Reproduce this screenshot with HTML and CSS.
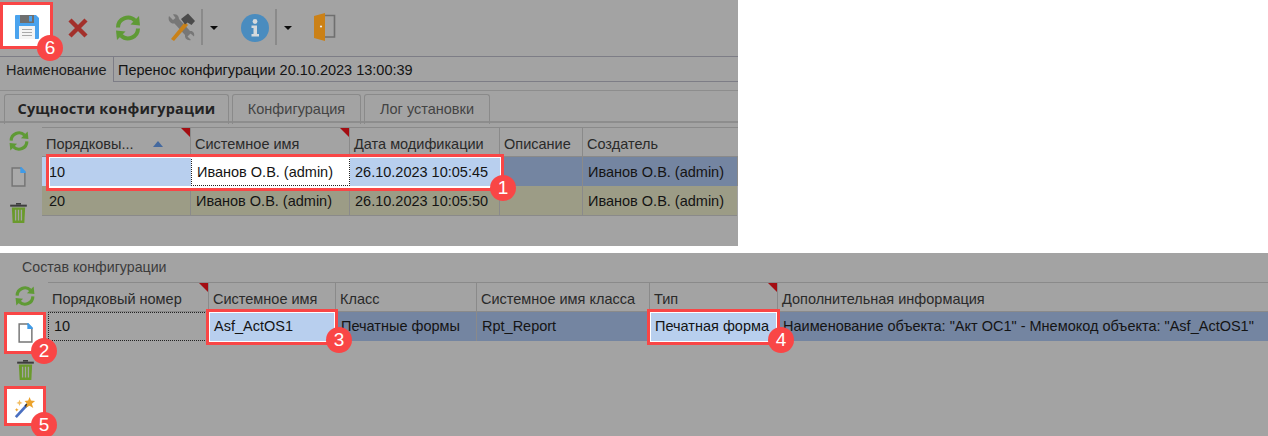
FILE: index.html
```html
<!DOCTYPE html>
<html lang="ru">
<head>
<meta charset="utf-8">
<title>Перенос конфигурации</title>
<link rel="stylesheet" href="styles.css">
</head>
<body>
<svg class="defs" width="0" height="0" aria-hidden="true">
  <symbol id="i-refresh" viewBox="0 0 28 28">
    <path d="M4 13.5A10 10 0 0 1 21 6.5" fill="none" stroke="#5f9a35" stroke-width="4"/>
    <path d="M16.5 10.5L26 11.5L25 2Z" fill="#5f9a35"/>
    <path d="M24 14.5A10 10 0 0 1 7 21.5" fill="none" stroke="#5f9a35" stroke-width="4"/>
    <path d="M11.5 17.5L2 16.5L3 26Z" fill="#5f9a35"/>
  </symbol>
  <symbol id="i-page" viewBox="0 0 16 22">
    <path d="M1 1H10.5L15 6V21H1Z" fill="currentColor" stroke="#757575" stroke-width="1.6"/>
    <path d="M10 0H11L16 5V6.5H10Z" fill="#3f9be8"/>
  </symbol>
  <symbol id="i-trash" viewBox="0 0 20 24">
    <rect x="7" y="0" width="6" height="2" fill="#3d3d3d"/>
    <rect x="0" y="2" width="20" height="2.4" fill="#3d3d3d"/>
    <path d="M2 5.5H18L17 24H3Z" fill="#6a9a2c"/>
    <path d="M6.5 8V21M10 8V21M13.5 8V21" stroke="#a3a3a3" stroke-width="1.6"/>
  </symbol>
</svg>

<main class="screen">
  <section class="panel panel-top">
    <div class="toolbar">
      <div class="tool tool-save">
        <svg class="icon" width="26" height="26" viewBox="0 0 26 26"><path d="M1 2a1 1 0 0 1 1-1H22L25 4V24a1 1 0 0 1-1 1H2a1 1 0 0 1-1-1Z" fill="#4aa3ee"/><rect x="6" y="1" width="14" height="8" fill="#6f6f6f"/><rect x="15" y="2" width="3" height="5.5" fill="#4aa3ee"/><rect x="5" y="12" width="16" height="13" fill="#f4f4f4"/><path d="M8 15.5H18M8 18.5H18M8 21.5H18" stroke="#a9a9a9" stroke-width="1"/></svg>
        <span class="ring ring-save"></span>
        <span class="badge badge-save">6</span>
      </div>
      <div class="tool tool-x">
        <svg class="icon" width="20" height="20" viewBox="0 0 20 20"><path d="M2 2L18 18M18 2L2 18" stroke="#a3302b" stroke-width="4.4"/></svg>
      </div>
      <div class="tool tool-refresh"><svg class="icon" width="28" height="28"><use href="#i-refresh"/></svg></div>
      <div class="tool tool-tools">
        <svg class="icon" width="29" height="29" viewBox="0 0 29 29"><path d="M3 3L7 7L9.5 5L7 1.5C10 0.5 13 2.5 13 6L24 18C27 17.5 29 20.5 28 23.5L24.5 20.5L21.5 23.5L25 27C21.5 28 18.5 25.5 19 22L8.5 10.5C4.5 11 1.5 7.5 3 3Z" fill="#777"/><path d="M5 26L19 9L22 12L8 28Z" fill="#c98118"/><path d="M15 6L22 0.5L29 8L25.5 12L21.5 9.5L19 11.5Z" fill="#4b4b4b"/></svg>
      </div>
      <div class="split"></div>
      <div class="caret"></div>
      <div class="tool tool-info">
        <svg class="icon" width="28" height="28" viewBox="0 0 28 28"><circle cx="14" cy="14" r="14" fill="#4a8cbf"/><circle cx="14" cy="7.5" r="2.4" fill="#d5d9dc"/><path d="M10.5 11.5H16V20H18V22.5H10.5V20H12.5V14H10.5Z" fill="#d5d9dc"/></svg>
      </div>
      <div class="split"></div>
      <div class="caret"></div>
      <div class="tool tool-door">
        <svg class="icon" width="23" height="30" viewBox="0 0 23 30"><path d="M11 3.5H21.5V25H11" fill="none" stroke="#6f6f6f" stroke-width="1.6"/><path d="M1 4L12 1V29L1 26Z" fill="#cb8117"/><circle cx="8" cy="14.5" r="1.1" fill="#eee"/></svg>
      </div>
    </div>

    <div class="name-row">
      <span class="name-label">Наименование</span>
      <div class="name-value">Перенос конфигурации 20.10.2023 13:00:39</div>
    </div>

    <div class="tabs">
      <div class="tab tab-active tab-1">Сущности конфигурации</div>
      <div class="tab tab-2">Конфигурация</div>
      <div class="tab tab-3">Лог установки</div>
    </div>

    <div class="work work-top">
      <div class="side side-top">
        <div class="side-btn"><svg class="icon" width="22" height="22"><use href="#i-refresh"/></svg></div>
        <div class="side-btn"><svg class="icon" width="15" height="20"><use href="#i-page"/></svg></div>
        <div class="side-btn"><svg class="icon" width="17" height="20"><use href="#i-trash"/></svg></div>
      </div>
      <div class="table table-top">
        <div class="row cols-top head">
          <div class="th">Порядковы...<span class="sort"></span><span class="flag"></span></div>
          <div class="th">Системное имя<span class="flag"></span></div>
          <div class="th">Дата модификации</div>
          <div class="th">Описание</div>
          <div class="th">Создатель</div>
        </div>
        <div class="row cols-top row-selected row-first">
          <div class="td td-light td-num">10</div>
          <div class="td td-focus">Иванов О.В. (admin)</div>
          <div class="td td-light">26.10.2023 10:05:45</div>
          <div class="td"></div>
          <div class="td">Иванов О.В. (admin)</div>
          <span class="ring ring-row"></span>
          <span class="badge badge-row">1</span>
        </div>
        <div class="row cols-top row-olive">
          <div class="td td-num">20</div>
          <div class="td">Иванов О.В. (admin)</div>
          <div class="td">26.10.2023 10:05:50</div>
          <div class="td"></div>
          <div class="td">Иванов О.В. (admin)</div>
        </div>
      </div>
    </div>
  </section>

  <section class="panel panel-bottom">
    <div class="group-title">Состав конфигурации</div>
    <div class="work work-bottom">
      <div class="side side-bottom">
        <div class="side-btn"><svg class="icon" width="22" height="22"><use href="#i-refresh"/></svg></div>
        <div class="side-btn side-spot">
          <svg class="icon" width="15" height="20"><use href="#i-page"/></svg>
          <span class="ring ring-side"></span>
          <span class="badge badge-side">2</span>
        </div>
        <div class="side-btn"><svg class="icon" width="17" height="20"><use href="#i-trash"/></svg></div>
        <div class="side-btn side-spot side-wand">
          <svg class="icon" width="22" height="22" viewBox="0 0 24 24"><path d="M2 23L14 10" stroke="#4a6fc0" stroke-width="3"/><path d="M12.5 11.5L15 9" stroke="#333" stroke-width="3"/><path d="M17 1L18.5 5L23 5.5L19.5 8.5L21 13L17 10.5L13 12.5L14.5 8.5L11.5 5.5L15.5 5Z" fill="#eca32c"/><path d="M6 4L7 6.5L9.5 7.5L7 8.5L6 11L5 8.5L2.5 7.5L5 6.5Z" fill="#f2bd63"/><path d="M3 13L3.7 14.5L5 15L3.7 15.7L3 17L2.3 15.7L1 15L2.3 14.5Z" fill="#eca32c"/></svg>
          <span class="ring ring-side"></span>
          <span class="badge badge-side">5</span>
        </div>
      </div>
      <div class="table table-bottom">
        <div class="row cols-bottom head">
          <div class="th">Порядковый номер<span class="flag"></span></div>
          <div class="th">Системное имя</div>
          <div class="th">Класс</div>
          <div class="th">Системное имя класса</div>
          <div class="th">Тип<span class="flag"></span></div>
          <div class="th">Дополнительная информация</div>
        </div>
        <div class="row cols-bottom row-selected">
          <div class="td td-dotted">10</div>
          <div class="td td-light td-mark">Asf_ActOS1<span class="ring ring-cell"></span><span class="badge badge-cell">3</span></div>
          <div class="td">Печатные формы</div>
          <div class="td">Rpt_Report</div>
          <div class="td td-light td-mark">Печатная форма<span class="ring ring-cell"></span><span class="badge badge-cell">4</span></div>
          <div class="td">Наименование объекта: "Акт ОС1" - Мнемокод объекта: "Asf_ActOS1"</div>
        </div>
      </div>
    </div>
  </section>
</main>
</body>
</html>
```
FILE: styles.css
```css
* { box-sizing: border-box; }
html, body { margin: 0; padding: 0; background: #fff; }
body {
  width: 1268px;
  height: 436px;
  overflow: hidden;
  font-family: "Liberation Sans", Arial, sans-serif;
  font-size: 14.5px;
  color: #141414;
}
.defs { position: absolute; }
.screen { display: flex; flex-direction: column; gap: 7px; }
.panel { background: #a3a3a3; }
.panel-top { width: 738px; height: 246px; }
.panel-bottom { width: 1268px; height: 183px; }
.icon { display: block; flex: none; }

/* toolbar */
.toolbar { height: 57px; display: flex; align-items: center; border-bottom: 1px solid #7d7d86; }
.tool { position: relative; display: flex; align-items: center; justify-content: center; flex: none; }
.tool-save { width: 53px; height: 47px; margin-top: -6px; padding-top: 3px; background: #fff; }
.tool-x { width: 20px; margin-left: 15px; margin-top: -1px; }
.tool-refresh { width: 28px; margin-left: 26px; margin-top: -1px; }
.tool-tools { width: 29px; margin-left: 24px; margin-top: -1px; }
.tool-info { width: 28px; margin-left: 23px; margin-top: -1px; }
.tool-door { width: 23px; margin-left: 21px; margin-top: -2px; }
.split { width: 2px; height: 36px; margin-left: 6px; background: #8a8a8a; margin-top: -2px; flex: none; }
.caret { width: 0; height: 0; margin-left: 7px; border: 4px solid transparent; border-top: 4px solid #0c0c0c; border-bottom: 0; margin-top: -1px; flex: none; }

/* annotations */
.ring { position: absolute; border: 3px solid #f94646; pointer-events: none; z-index: 2; }
.badge {
  position: absolute;
  z-index: 3;
  width: 26px;
  height: 26px;
  border-radius: 50%;
  background: #f94646;
  color: #fff;
  font-size: 19px;
  line-height: 26px;
  text-align: center;
}
.ring-save { inset: 0; }
.badge-save { left: 37px; top: 33px; }
.ring-row {
  left: 4px;
  top: -3px;
  width: 458px;
  height: 37px;
  box-shadow: inset 0 -2px 0 #fff, inset 0 1px 0 #fff, inset 1px 0 0 #fff, inset -1px 0 0 #fff;
}
.badge-row { left: 448px; top: 18px; }
.ring-side { left: 0; top: -2px; width: 42px; height: 42px; }
.side-wand .ring-side { height: 40px; }
.badge-side { left: 27px; top: 24px; }
.ring-cell { left: -3px; top: -3px; right: -2px; bottom: -4px; box-shadow: inset 0 0 0 1px #fff; }
.badge-cell { right: -16px; top: 15px; }

/* name row */
.name-row { height: 26px; margin-top: -1px; display: flex; align-items: center; padding-left: 6px; }
.name-label { width: 107px; flex: none; color: #1e1e1e; padding-top: 2px; }
.name-value {
  flex: 1;
  height: 26px;
  line-height: 26px;
  padding-left: 4px;
  border: 1px solid #7d7d86;
  border-right: 0;
  color: #141414;
}

/* tabs */
.tabs {
  height: 33px;
  margin-top: 8px;
  padding: 3px 0 0 4px;
  display: flex;
  gap: 3px;
  border-top: 1px solid #8d8d8d;
  border-bottom: 2px solid #8d8d8d;
}
.tab {
  height: 30px;
  border: 1px solid #8a8a8a;
  border-bottom: 0;
  border-radius: 3px 3px 0 0;
  text-align: center;
  line-height: 28px;
  color: #444;
}
.tab-active { font-family: "Open Sans", "Liberation Sans", sans-serif; font-size: 14.5px; font-weight: 700; letter-spacing: 0.2px; color: #232323; }
.tab-1 { width: 225px; }
.tab-2 { width: 129px; }
.tab-3 { width: 126px; }

/* work */
.work { display: flex; }
.work-top { margin-top: 4px; }
.side { flex: none; display: flex; flex-direction: column; align-items: stretch; }
.side-top { width: 42px; margin-top: -4px; }
.side-top .side-btn { height: 36px; width: 37px; }
.side-bottom { width: 48px; padding-left: 4px; margin-top: -5px; }
.side-bottom .side-btn { height: 37px; width: 42px; }
.side-btn { position: relative; display: flex; align-items: center; justify-content: center; color: #a9a9a9; }
.side-spot { background: #fff; color: #fff; }

/* tables */
.table { flex: 1; min-width: 0; }
.row { display: grid; position: relative; }
.cols-top { grid-template-columns: 149px 159px 150px 83px 155px; }
.cols-bottom { grid-template-columns: 161px 127px 141px 173px 128px 490px; }
.head { height: 30px; border-top: 1px solid #8a8a8a; border-bottom: 1px solid #8a8a8a; }
.th {
  position: relative;
  padding: 0 4px;
  line-height: 33px;
  white-space: nowrap;
  color: #2a2a2a;
  border-right: 1px solid #8a8a8a;
}
.th:last-child { border-right: 0; }
.flag {
  position: absolute;
  right: 0;
  top: 0;
  border-top: 9px solid #a40d12;
  border-left: 9px solid transparent;
}
.sort {
  position: absolute;
  left: 111px;
  top: 13px;
  border: 5.5px solid transparent;
  border-bottom: 6px solid #44699f;
  border-top: 0;
}
.td {
  position: relative;
  height: 29px;
  padding: 0 5px;
  line-height: 30px;
  white-space: nowrap;
  color: #141414;
  border-right: 1px solid #8a8a8a;
}
.td:last-child { border-right: 0; }
.cols-bottom .td { line-height: 28px; }
.row-selected { background: #7485a1; }
.row-first { width: 695px; }
.row-first::before {
  content: "";
  position: absolute;
  left: 0;
  top: 1px;
  width: 4px;
  height: 28px;
  background: #505b73;
}
.row-olive { background: #9c9c86; width: 695px; border-bottom: 1px solid #8a8a8a; height: 30px; }
.td-num { padding-left: 7px; }
.td-light { background: #b8cfee; border-right-color: #b8cfee; }
.td-focus { background: #fff; padding-left: 6px; outline: 1px dotted #222; outline-offset: -1px; border-right: 0; }
.td-dotted { background: #a3a3a3; padding-left: 6px; outline: 1px dotted #222; outline-offset: -1px; border-right: 0; }
.td-mark { border-right: 0; }

/* bottom */
.group-title { height: 29px; padding-left: 22px; line-height: 28px; color: #3c3c3c; font-size: 14.2px; }
```
